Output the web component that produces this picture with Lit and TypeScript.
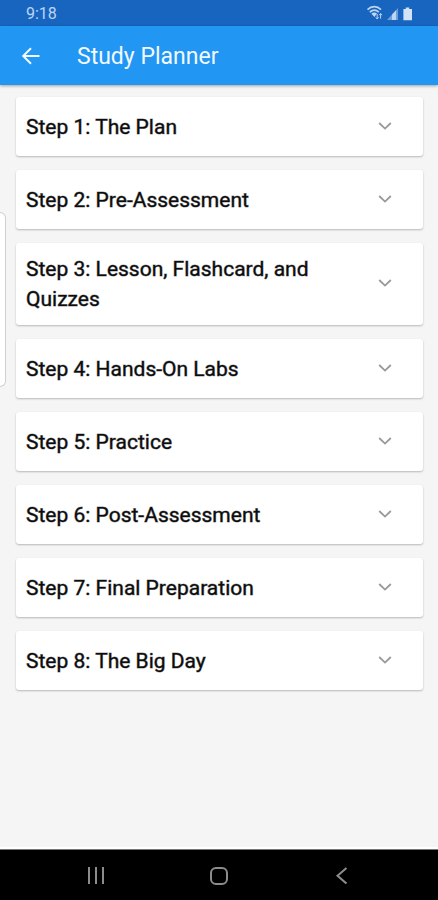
import { LitElement, html, css } from "lit";
import { customElement, property, state } from "lit/decorators.js";

@customElement("step-card")
class StepCard extends LitElement {
  @property() heading = "";
  @property({ type: Boolean }) expanded = false;

  static styles = css`
    :host { display: block; }
    .card {
      display: flex;
      align-items: center;
      justify-content: space-between;
      gap: 24px;
      box-sizing: border-box;
      width: 100%;
      min-height: 59px;
      margin: 0;
      padding: 11px 31px 11px 10px;
      border: 0;
      border-radius: 3px;
      background: #fff;
      box-shadow: 0 1px 2px rgba(0, 0, 0, 0.25);
      color: #0c0c0c;
      font: 400 21px/30px Roboto, sans-serif;
      -webkit-text-stroke: 1px rgba(12, 12, 12, 0.45);
      text-align: left;
      cursor: pointer;
    }
    .label { flex: 1; max-width: 300px; }
    .chevron { flex: none; display: block; }
    .expanded .chevron { transform: rotate(180deg); }
  `;

  render() {
    return html`
      <button class="card ${this.expanded ? "expanded" : ""}" aria-expanded=${this.expanded ? "true" : "false"}>
        <span class="label">${this.heading}</span>
        <svg class="chevron" width="14" height="10" viewBox="0 0 14 10" fill="none" stroke="#999" stroke-width="1.8" aria-hidden="true">
          <path d="M1.2 1 7 6.6 12.8 1" />
        </svg>
      </button>
    `;
  }
}

@customElement("app-root")
class AppRoot extends LitElement {
  @state() private open = -1;

  private steps = [
    "The Plan",
    "Pre-Assessment",
    "Lesson, Flashcard, and Quizzes",
    "Hands-On Labs",
    "Practice",
    "Post-Assessment",
    "Final Preparation",
    "The Big Day",
  ];

  static styles = css`
    :host {
      display: flex;
      flex-direction: column;
      position: relative;
      min-height: 100vh;
      background: #f5f5f5;
      font-family: Roboto, sans-serif;
    }
    button {
      display: flex;
      align-items: center;
      justify-content: center;
      padding: 0;
      border: 0;
      background: none;
      cursor: pointer;
    }
    svg { display: block; }
    .status {
      display: flex;
      align-items: center;
      justify-content: space-between;
      height: 26px;
      padding: 0 24px 0 26px;
      background: #1865c0;
      color: #bdd5f3;
      font-size: 16px;
      line-height: 26px;
    }
    .time { padding-top: 2px; }
    .bar {
      display: flex;
      align-items: center;
      gap: 34px;
      height: 59px;
      padding: 0 19px;
      background: #2196f3;
      box-shadow: 0 1px 3px rgba(0, 0, 0, 0.35);
    }
    .back { width: 24px; height: 40px; }
    h1 {
      margin: 0;
      padding-top: 2px;
      color: #f2f9ff;
      font-size: 23px;
      font-weight: 400;
      line-height: 32px;
    }
    main {
      flex: 1;
      display: flex;
      flex-direction: column;
      gap: 14px;
      padding: 12px 15px 24px 16px;
    }
    .edge {
      position: absolute;
      left: 0;
      top: 212px;
      box-sizing: border-box;
      width: 6px;
      height: 175px;
      border: 1px solid #cfcfcf;
      border-left: 0;
      border-radius: 0 6px 6px 0;
      background: #fff;
    }
    .nav {
      display: grid;
      grid-template-columns: repeat(3, 28%);
      justify-content: center;
      height: 50px;
      border-top: 1px solid #777;
      background: #000;
      box-shadow: 0 -2px 0 #fff;
    }
  `;

  private toggle(i: number) {
    this.open = this.open === i ? -1 : i;
  }

  render() {
    return html`
      <div class="status">
        <span class="time">9:18</span>
        <svg width="48" height="16" viewBox="0 0 48 16" fill="none" stroke="#bdd5f3" aria-hidden="true">
          <path d="M1.5 4.6C5.5.6 11 .6 15 4.6M3.8 7.2c2.8-2.6 6.3-2.6 9 0" stroke-width="1.6" />
          <path d="M5.4 8.8c1.7-1.6 4-1.6 5.6-.2L8.4 12z" fill="#bdd5f3" stroke="none" />
          <path d="M11.2 9v5M9.8 12.4l1.4 1.6 1.4-1.6M14.6 13.6V8.6M13.2 10.2l1.4-1.6 1.4 1.6" stroke-width="1" />
          <path d="M21 15 32 3v12z" fill="#6f9fdb" stroke="none" />
          <path d="M26 15V9.6l4-4.4V15z" fill="#bdd5f3" stroke="none" />
          <path d="M39.8 2.4h3.4V4H46v11.2h-8.6V4h2.4z" fill="#d3e3f7" stroke="none" />
        </svg>
      </div>
      <header class="bar">
        <button class="back" aria-label="Back">
          <svg width="22" height="22" viewBox="0 0 22 22" fill="none" stroke="#f2f9ff" stroke-width="2">
            <path d="M19.5 11H3.5M11 3.2 3.2 11l7.8 7.8" />
          </svg>
        </button>
        <h1>Study Planner</h1>
      </header>
      <main>
        ${this.steps.map(
          (s, i) => html`<step-card
            .heading=${`Step ${i + 1}: ${s}`}
            .expanded=${this.open === i}
            @click=${() => this.toggle(i)}
          ></step-card>`
        )}
      </main>
      <div class="edge"></div>
      <nav class="nav">
        <button aria-label="Recent apps">
          <svg width="18" height="18" viewBox="0 0 18 18" fill="none" stroke="#8c8c8c" stroke-width="2">
            <path d="M2 1v17M9 1v17M16 1v17" />
          </svg>
        </button>
        <button aria-label="Home">
          <svg width="20" height="20" viewBox="0 0 20 20" fill="none" stroke="#8c8c8c" stroke-width="2">
            <rect x="2" y="3" width="16" height="16" rx="5" />
          </svg>
        </button>
        <button aria-label="Go back">
          <svg width="18" height="18" viewBox="0 0 18 18" fill="none" stroke="#8c8c8c" stroke-width="2">
            <path d="M13.5 2 4.5 9.8l9 7.8" />
          </svg>
        </button>
      </nav>
    `;
  }
}
